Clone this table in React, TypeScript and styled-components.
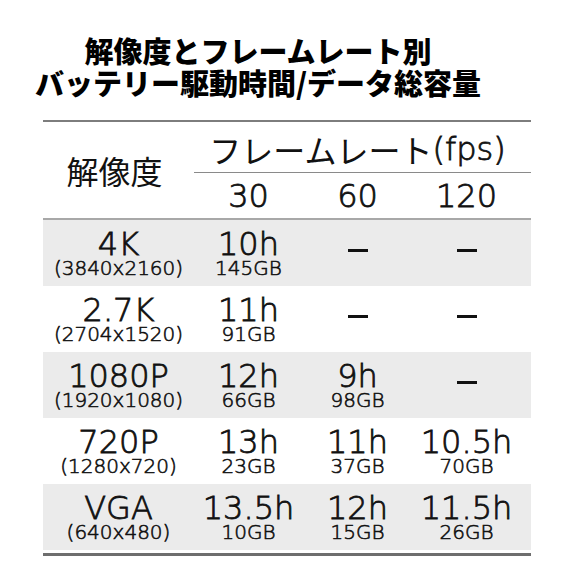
import React from "react";
import styled, { createGlobalStyle } from "styled-components";

const GlobalStyle = createGlobalStyle`
  html, body {
    margin: 0;
    padding: 0;
    background: #ffffff;
  }
  body {
    font-family: "DejaVu Sans", "Noto Sans CJK JP", sans-serif;
    color: #111111;
  }
`;

const Page = styled.div`
  width: 578px;
  height: 578px;
  overflow: hidden;
  background: #ffffff;
`;

const Title = styled.h1`
  margin: 0;
  padding: 34px 62px 0 0;
  font-family: "Noto Sans CJK JP", sans-serif;
  font-weight: 900;
  font-size: 29px;
  line-height: 32px;
  text-align: center;
  color: #000000;
`;

const Table = styled.div`
  width: 488px;
  margin: 22px 0 0 43px;
  border-top: 2px solid #7d7d7d;
  border-bottom: 3px solid #6e6e6e;
  padding-bottom: 3px;
  font-weight: 300;
  -webkit-text-stroke: 0.8px #111111;
`;

const Header = styled.div`
  display: grid;
  grid-template-columns: 151px 109px 109px 109px 1fr;
  grid-template-rows: 51px 45px;
  border-bottom: 2px solid #a8a8a8;
`;

const ResHead = styled.div`
  grid-column: 1;
  grid-row: 1 / 3;
  display: flex;
  align-items: center;
  justify-content: center;
  padding-right: 8px;
  font-family: "Noto Sans CJK JP", sans-serif;
  font-size: 32px;
  font-weight: 400;
  -webkit-text-stroke: 0;
`;

const FpsHead = styled.div`
  grid-column: 2 / 6;
  grid-row: 1;
  display: flex;
  align-items: center;
  justify-content: center;
  padding: 4px 10px 0 0;
  border-bottom: 1px solid #8a8a8a;
  font-size: 32px;
  line-height: 1;
  white-space: nowrap;
`;

const Kana = styled.span`
  font-family: "Noto Sans CJK JP", sans-serif;
  font-weight: 400;
  -webkit-text-stroke: 0;
`;

const Latin = styled.span`
  font-family: "DejaVu Sans", sans-serif;
`;

const RateHead = styled.div<{ $col: number }>`
  grid-column: ${(p) => p.$col};
  grid-row: 2;
  display: flex;
  align-items: center;
  justify-content: center;
  font-size: 32px;
  line-height: 1;
`;

const Row = styled.div<{ $shaded: boolean }>`
  display: grid;
  grid-template-columns: 151px 109px 109px 109px 1fr;
  height: 66px;
  background: ${(p) => (p.$shaded ? "#ebebeb" : "#ffffff")};
`;

const Cell = styled.div`
  display: flex;
  flex-direction: column;
  align-items: center;
  justify-content: center;
  white-space: nowrap;
`;

const Main = styled.span`
  font-size: 32px;
  line-height: 30px;
`;

const Sub = styled.span`
  font-size: 20px;
  line-height: 18px;
  -webkit-text-stroke: 0.6px #111111;
`;

const Dash = styled.span`
  display: block;
  width: 20px;
  height: 3px;
  margin-top: -6px;
  background: #111111;
`;

type Entry = [string, string] | null;

const rows: { name: string; res: string; cells: Entry[] }[] = [
  { name: "4K", res: "(3840x2160)", cells: [["10h", "145GB"], null, null] },
  { name: "2.7K", res: "(2704x1520)", cells: [["11h", "91GB"], null, null] },
  { name: "1080P", res: "(1920x1080)", cells: [["12h", "66GB"], ["9h", "98GB"], null] },
  { name: "720P", res: "(1280x720)", cells: [["13h", "23GB"], ["11h", "37GB"], ["10.5h", "70GB"]] },
  { name: "VGA", res: "(640x480)", cells: [["13.5h", "10GB"], ["12h", "15GB"], ["11.5h", "26GB"]] },
];

export default function App() {
  return (
    <Page>
      <GlobalStyle />
      <Title>
        解像度とフレームレート別
        <br />
        バッテリー駆動時間/データ総容量
      </Title>
      <Table>
        <Header>
          <ResHead>解像度</ResHead>
          <FpsHead>
            <Kana>フレームレート</Kana>
            <Latin>(fps)</Latin>
          </FpsHead>
          <RateHead $col={2}>30</RateHead>
          <RateHead $col={3}>60</RateHead>
          <RateHead $col={4}>120</RateHead>
        </Header>
        {rows.map((r, i) => (
          <Row key={r.name} $shaded={i % 2 === 0}>
            <Cell>
              <Main>{r.name}</Main>
              <Sub>{r.res}</Sub>
            </Cell>
            {r.cells.map((c, j) => (
              <Cell key={j}>
                {c ? (
                  <>
                    <Main>{c[0]}</Main>
                    <Sub>{c[1]}</Sub>
                  </>
                ) : (
                  <Dash aria-label="–" />
                )}
              </Cell>
            ))}
          </Row>
        ))}
      </Table>
    </Page>
  );
}
